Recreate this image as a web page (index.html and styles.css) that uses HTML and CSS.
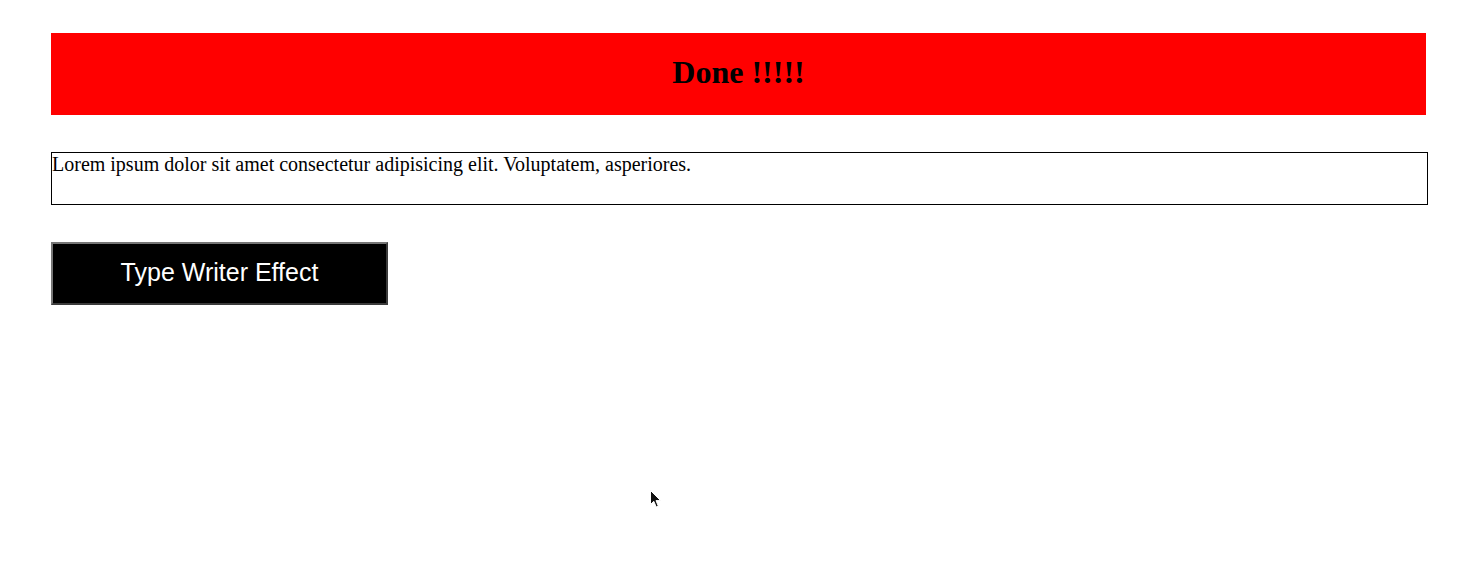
FILE: index.html
```html
<!DOCTYPE html>
<html>
<head>
<meta charset="utf-8">
<link rel="stylesheet" href="styles.css">
</head>
<body>
<main class="page">
  <h1 class="banner">Done !!!!!</h1>
  <div class="textbox">Lorem ipsum dolor sit amet consectetur adipisicing elit. Voluptatem, asperiores.</div>
  <button class="btn">Type Writer Effect</button>
</main>
<svg class="cursor" width="12" height="20" viewBox="0 0 12 20"><path d="M0.5 0.5 L0.5 14.5 L3.8 11.3 L6.2 17 L8.3 16.1 L6 10.6 L10.6 10.6 Z" fill="#111" stroke="#fff" stroke-width="1"/></svg>
</body>
</html>
```
FILE: styles.css
```css
html, body {
  margin: 0;
  padding: 0;
  background: #fff;
}
.page {
  padding: 33px 46px 0 51px;
  display: flex;
  flex-direction: column;
  align-items: flex-start;
  font-family: "Liberation Serif", "Times New Roman", serif;
}
.banner {
  box-sizing: border-box;
  margin: 0;
  width: 100%;
  height: 82px;
  padding-bottom: 4px;
  background: #ff0000;
  color: #000;
  font-size: 32px;
  font-weight: bold;
  display: flex;
  align-items: center;
  justify-content: center;
}
.textbox {
  margin-top: 37px;
  width: 100%;
  height: 51px;
  border: 1px solid #000;
  font-size: 20px;
  line-height: 23px;
  color: #000;
}
.btn {
  box-sizing: border-box;
  margin-top: 37px;
  width: 337px;
  height: 63px;
  background: #000;
  color: #fff;
  border: 2px solid;
  border-color: #767676 #3b3b3b #3b3b3b #767676;
  font-family: "Liberation Sans", Arial, sans-serif;
  font-size: 25px;
  padding: 0 0 3px 0;
}
.cursor {
  position: absolute;
  left: 650px;
  top: 490px;
}
```
